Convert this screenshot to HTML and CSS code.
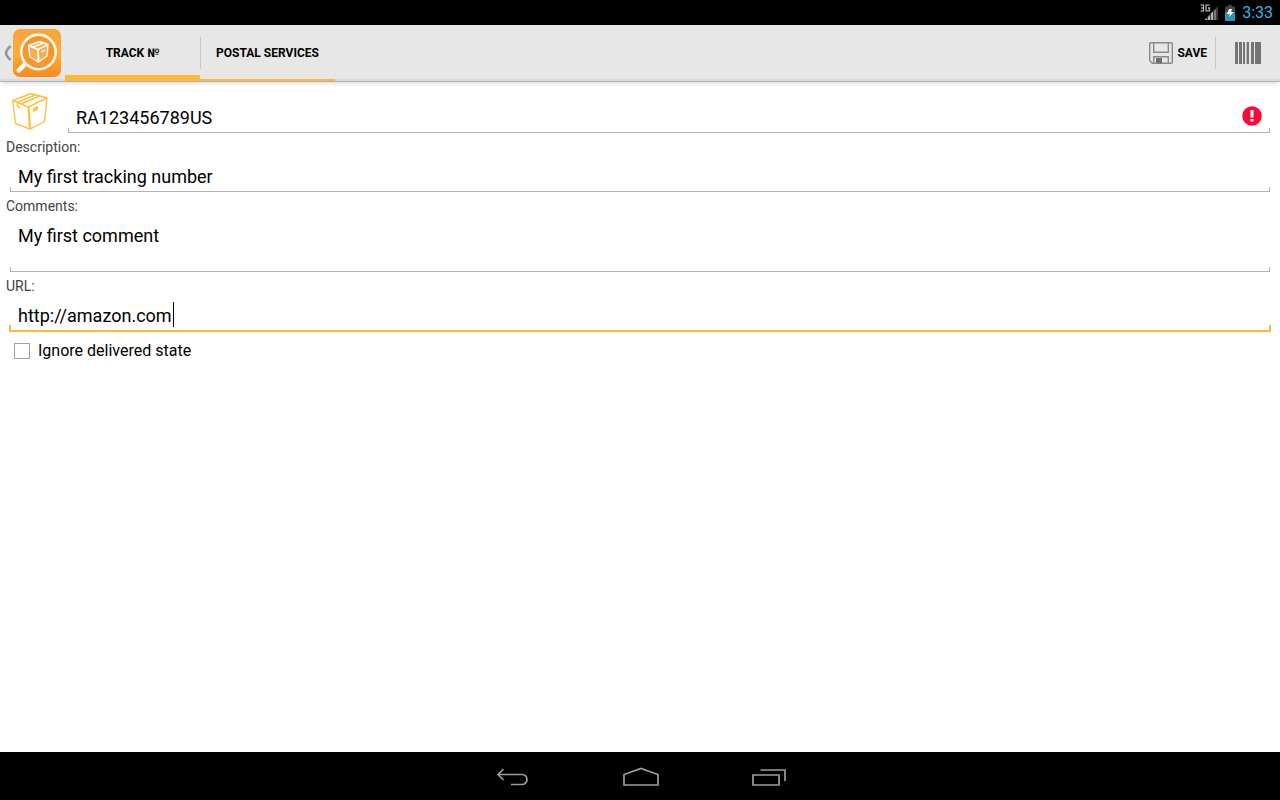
FILE: index.html
```html
<!DOCTYPE html>
<html lang="en">
<head>
<meta charset="utf-8">
<meta name="viewport" content="width=device-width, initial-scale=1">
<title>Track number</title>
<link rel="stylesheet" href="styles.css">
</head>
<body>
<div class="status">
  <svg width="20" height="17" viewBox="0 0 20 17" aria-label="3G signal" role="img">
    <g fill="none" stroke="#b0b0b0" stroke-width="1.300"><path d="M.5 1.200h3v5.600h-3M1 4h2.500M9.500 1.200h-3.500v5.600h3.500v-2.800h-1.500"/></g>
    <path d="M4 16L18 2v14z" fill="#3a3a3a"/>
    <path d="M5 16l2-2v2zM8 13l2-2v5h-2zM11 9.500l2-2V16h-2z" fill="#b8b8b8"/>
    <path d="M14 7l2-2v11h-2z" fill="#777"/>
  </svg>
  <svg width="10" height="16" viewBox="0 0 10 16" aria-label="Battery charging" role="img">
    <path d="M3 0h4v1.500h3V7H0V1.500h3z" fill="#454545"/><path d="M0 7h10v9H0z" fill="#2a93bb"/>
    <path d="M4 4h3L6 7h2.500L4 12 4.800 9H2z" fill="#fff"/>
  </svg>
  <span class="clock">3:33</span>
</div>

<header class="bar">
  <button class="home" type="button" aria-label="Back">
    <svg width="9" height="16" viewBox="0 0 9 16"><path d="M7.500 1Q3 5.500 3 8T7.500 15" fill="none" stroke="#969696" stroke-width="2.600"/></svg>
    <svg width="48" height="48" viewBox="0 0 48 48">
      <defs><linearGradient id="tile" x2="0" y2="1"><stop stop-color="#f8a53a"/><stop offset=".5" stop-color="#ffad35"/><stop offset="1" stop-color="#f98a1c"/></linearGradient></defs>
      <rect width="48" height="48" rx="7" fill="url(#tile)"/>
      <path d="M14 33L5.800 41.500" stroke="#fff" stroke-width="4.500" stroke-linecap="round"/>
      <circle cx="25.500" cy="23" r="17.200" fill="#f9962c" stroke="#fff" stroke-width="2.400"/>
      <path d="M15.500 16.500l11.500-4 8 3-10 5zM15.500 16.500l1.500 11.500 8.500 5 8.500-6 1-11.500-10 5z" fill="#fbab48" stroke="#fff" stroke-width="1.400" stroke-linejoin="round"/>
      <path d="M25 20.500l.5 12.500M19 18.500l11.500-4.500" fill="none" stroke="#fff" stroke-width="1.800"/>
      <path d="M28.500 22l3.500-1.500v1.500l-3.500 1.500z" fill="#fff"/>
    </svg>
  </button>
  <nav class="tabs">
    <a class="tab active" href="#track" aria-current="page">TRACK №</a>
    <a class="tab" href="#services">POSTAL SERVICES</a>
  </nav>
  <div class="actions">
    <button class="save" type="submit" form="track">
      <svg width="24" height="22" viewBox="0 0 24 22"><g fill="none" stroke="#8a8a8a" stroke-width="1.400"><path d="M1.700.7h20.600q1 0 1 1v18.600q0 1-1 1H3.200l-2.500-2.500V1.700q0-1 1-1zM4.700.7v9.600h14.600V.7M4.700 21v-6.300h14.600V21"/></g><path d="M7 16h6v5H7z" fill="#6e6e6e"/></svg>
      SAVE
    </button>
    <button class="scan" type="button" aria-label="Scan barcode">
      <svg width="26" height="22" viewBox="0 0 26 22" fill="#757575" shape-rendering="crispEdges"><path d="M0 0h3v22H0zM4 0h3v22H4zM8 0h2v22H8zM12 0h2v22h-2zM16 0h3v22h-3zM20 0h6v22h-6z"/><path d="M11 0h1v22h-1z" fill="#bbb"/></svg>
    </button>
  </div>
</header>

<main class="content">
  <form id="track">
    <div class="number">
      <svg class="box" width="36" height="38" viewBox="0 0 36 38" fill="none" stroke="#fdc040" stroke-width="1.400" stroke-linejoin="round">
        <path d="M.8 8.500L19 1.500l16 4.500-18.500 9zM.8 8.500L3.500 31.500l14.500 5.700 14.500-7.700L35 6l-18.500 9z"/>
        <path d="M16.500 15l1.500 22" stroke-width="2.200"/><path d="M5.500 10.500L23 3M9 12l18.500-8M5.500 10.500v4l2.500 1.500"/>
        <path d="M21.500 17l4-2v2l-4 2z" fill="#fdc040"/>
      </svg>
      <div class="field">
        <input type="text" aria-label="Tracking number" value="RA123456789US">
        <svg class="error" width="20" height="20" viewBox="0 0 20 20" role="img" aria-label="Error"><circle cx="10" cy="10" r="9.800" fill="#ff0a37"/><path d="M8.500 4h3v7.500h-3zM8.500 13h3v2.500h-3z" fill="#fff"/></svg>
      </div>
    </div>
    <label class="label" for="desc">Description:</label>
    <div class="field"><input id="desc" type="text" value="My first tracking number"></div>
    <label class="label" for="comments">Comments:</label>
    <div class="field"><textarea id="comments">My first comment</textarea></div>
    <label class="label" for="url">URL:</label>
    <div class="field focused"><input id="url" type="url" value="http://amazon.com"><span class="caret"></span></div>
    <label class="check"><input type="checkbox">Ignore delivered state</label>
  </form>
</main>

<footer class="nav">
  <button type="button" aria-label="Back"><svg width="34" height="20" viewBox="0 0 34 20"><path d="M1.500 7.500H26a5 5 0 0 1 0 10H15M7.500 2L2 7.500 7.500 13"/></svg></button>
  <button type="button" aria-label="Home"><svg width="36" height="20" viewBox="0 0 36 20"><path d="M1 18V7.500L18 1.500l17 6V18z"/></svg></button>
  <button type="button" aria-label="Recent apps"><svg width="34" height="20" viewBox="0 0 34 20"><path d="M1 8h26v10H1zM8.500 3H33v11"/></svg></button>
</footer>
</body>
</html>
```
FILE: styles.css
```css
* { box-sizing: border-box; }

body {
  margin: 0;
  min-height: 100vh;
  display: flex;
  flex-direction: column;
  background: #fff;
  color: #000;
  font-family: Roboto, sans-serif;
}

button, input, textarea { font: inherit; color: inherit; }
button { border: 0; padding: 0; background: none; }
svg { display: block; flex: none; }

.status {
  height: 25px;
  padding-right: 7px;
  display: flex;
  align-items: center;
  justify-content: flex-end;
  background: #000;
}
.clock { margin-left: 7px; font-size: 16px; color: #33b5e5; }
.status svg + svg { margin-left: 5px; }

.bar {
  height: 57px;
  display: flex;
  background: linear-gradient(#e7e7e7 54px, #dadada 54px, #dadada 56px, #b4b4b4 56px);
  box-shadow: 0 4px 4px -2px #e4dfe1;
}
.home { display: flex; align-items: center; gap: 1px; padding: 0 4px 1px 3px; }
.tabs { display: flex; padding-bottom: 1px; }
.tab {
  width: 135px;
  display: flex;
  align-items: center;
  justify-content: center;
  position: relative;
  border-bottom: 2px solid #ffb932;
  font-size: 12px;
  font-weight: 700;
  color: #000;
  text-decoration: none;
}
.tab { padding-top: 2px; }
.tab.active { border-bottom-width: 6px; padding-top: 6px; }
.tab.active::after {
  content: "";
  position: absolute;
  top: 12px;
  right: -1px;
  width: 1px;
  height: 32px;
  background: #c8c8c8;
}
.actions { margin-left: auto; display: flex; align-items: center; padding-bottom: 2px; }
.save {
  height: 32px;
  display: flex;
  align-items: center;
  gap: 4px;
  padding-right: 8px;
  border-right: 1px solid #c8c8c8;
  font-size: 12px;
  font-weight: 700;
}
.scan { padding: 0 19px; }

.content { flex: 1; padding: 10px 9px 0; }
.number { display: flex; gap: 19px; padding-left: 3px; }
.number .field { flex: 1; margin-top: 5px; }

.field {
  position: relative;
  display: flex;
  margin: 0 1px 5px;
  padding: 9px 8px 3px;
  font-size: 18px;
  line-height: 24px;
}
.field::after {
  content: "";
  position: absolute;
  inset: auto 0 0;
  height: 4px;
  border: solid #b3b3b3;
  border-width: 0 1px 1px;
  pointer-events: none;
}
.field input, .field textarea {
  display: block;
  flex: 1;
  min-width: 0;
  height: 24px;
  margin: 0;
  padding: 0;
  border: 0;
  outline: 0;
  background: none;
  resize: none;
}
.field textarea { height: 45px; }
.field.focused { margin: 0; padding: 9px 9px 4px; }
.field.focused::after { height: 5px; border-color: #ffb932; border-width: 0 2px 2px; }
.field.focused input { flex: none; field-sizing: content; }
.caret { width: 1px; height: 25px; margin: -2px 0 0 1px; background: #000; }

.label {
  display: block;
  margin-left: -3px;
  font-size: 14px;
  line-height: 18px;
  color: #444;
}
.check {
  display: flex;
  align-items: center;
  gap: 8px;
  padding: 7px 5px;
  font-size: 16px;
  line-height: 24px;
}
.check input {
  appearance: none;
  width: 16px;
  height: 16px;
  margin: 0;
  border: 1px solid #a0a0a0;
}

.nav {
  height: 48px;
  padding: 2px 0 0 1px;
  display: flex;
  align-items: center;
  justify-content: center;
  gap: 93px;
  background: #000;
}
.nav svg { fill: none; stroke: #a19c9c; stroke-width: 1.700; }
```
